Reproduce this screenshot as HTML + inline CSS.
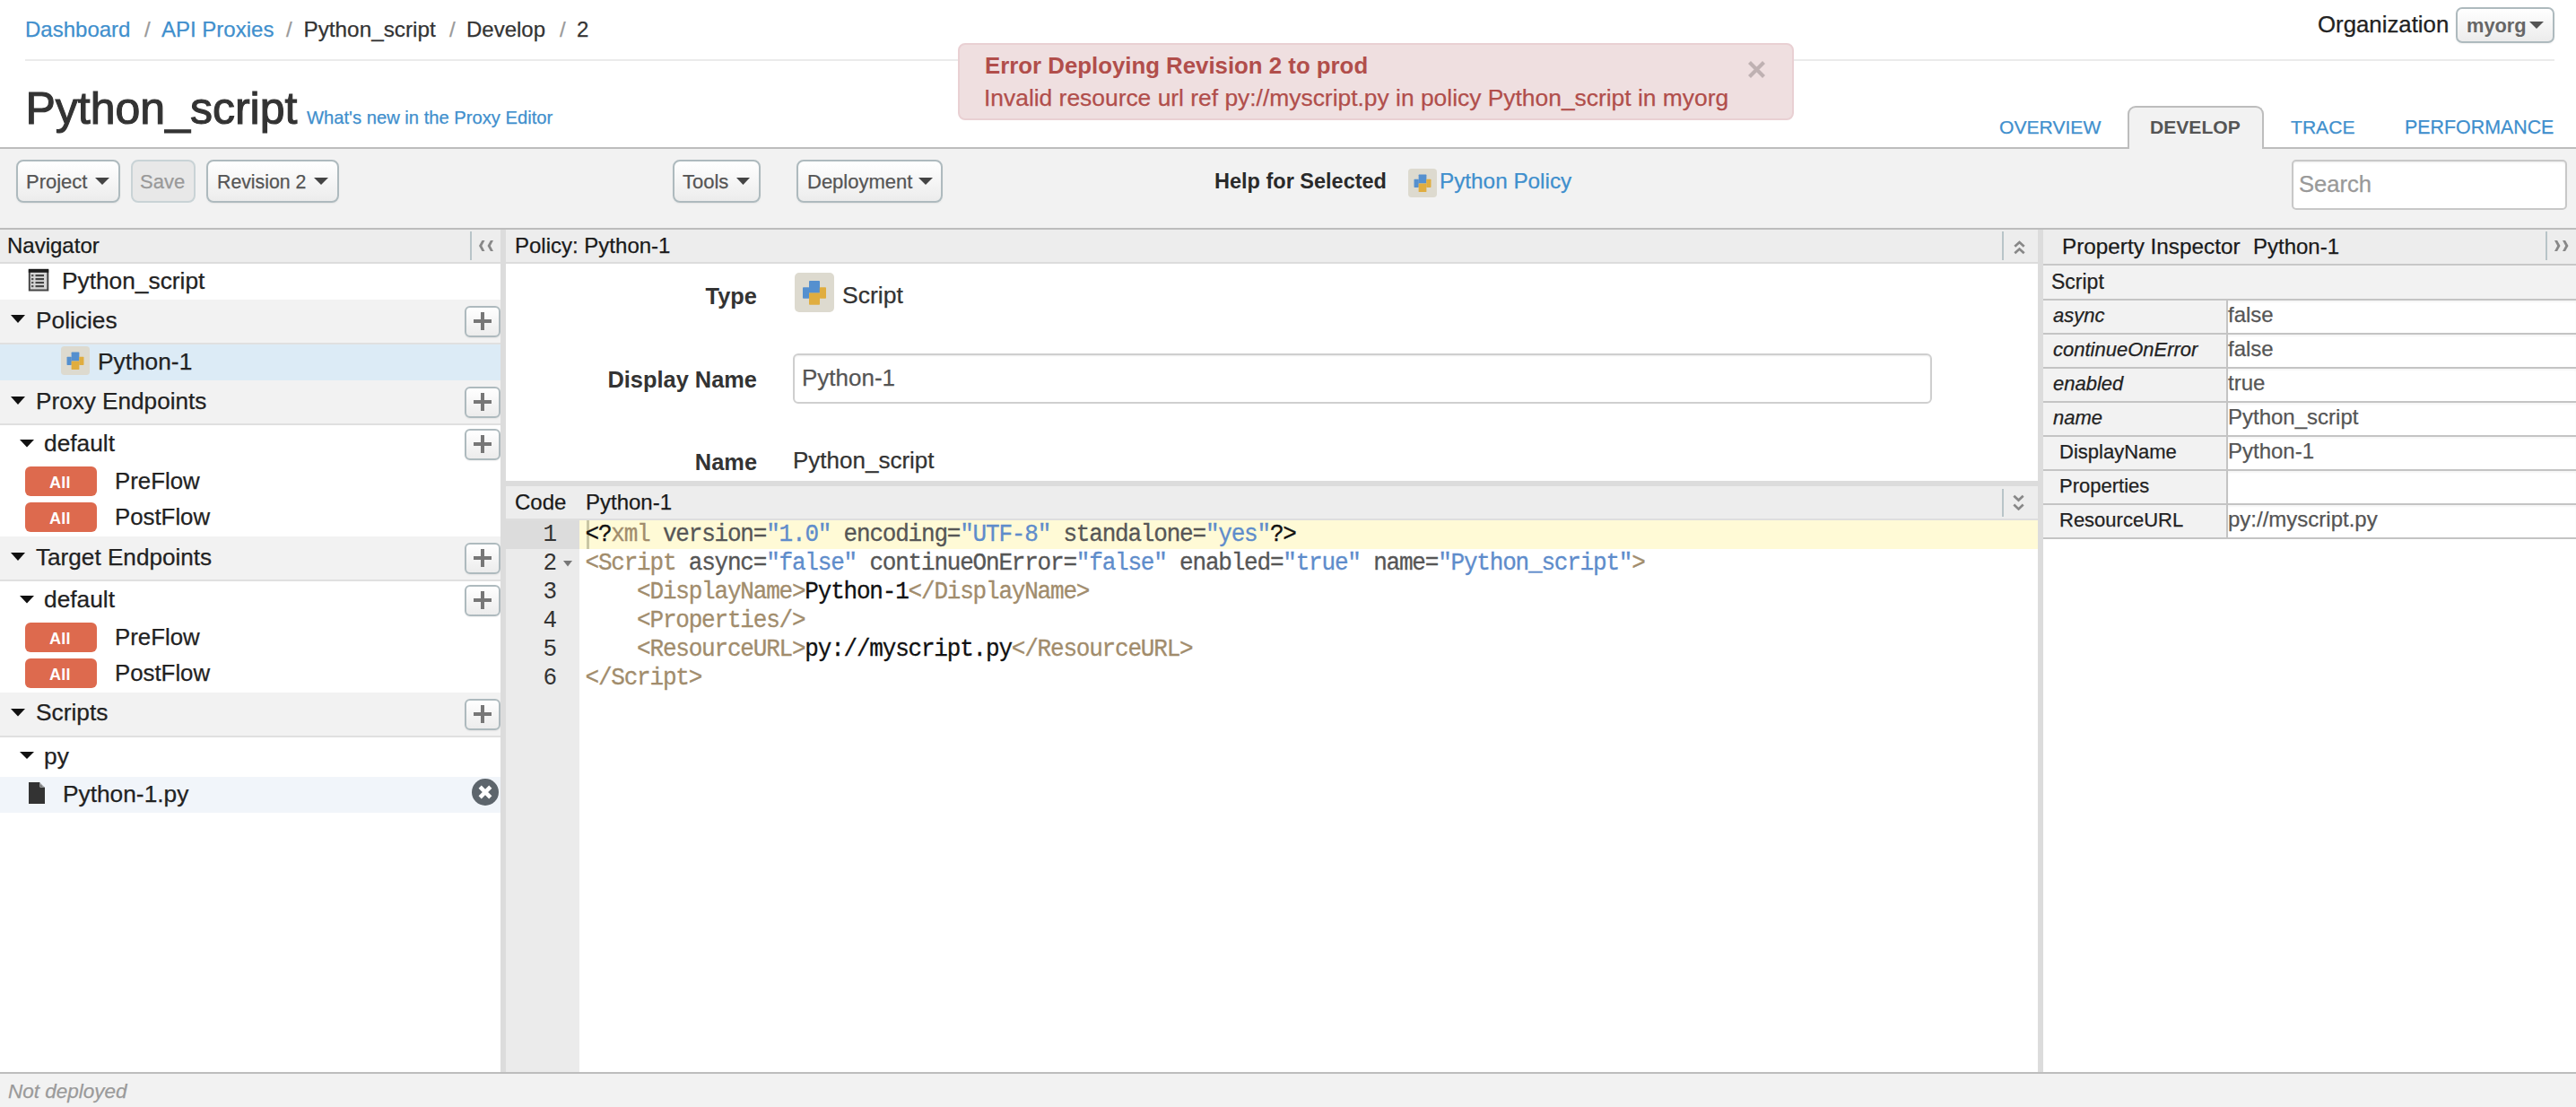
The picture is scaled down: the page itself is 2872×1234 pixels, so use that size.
<!DOCTYPE html>
<html><head><meta charset="utf-8"><title>Python_script - Develop</title>
<style>
html,body{margin:0;padding:0;width:2872px;height:1234px;overflow:hidden;background:#fff;}
body{position:relative;font-family:"Liberation Sans",sans-serif;}
body>div{position:absolute;}
</style></head><body>
<div style="left:28px;top:66px;width:2820px;height:2px;background:#ebebeb;"></div>
<div style="left:28px;top:19.4px;font-family:'Liberation Sans', sans-serif;font-size:24px;line-height:27px;color:#3f8fcd;white-space:pre;-webkit-text-stroke:0.25px #3f8fcd;">Dashboard</div>
<div style="left:161px;top:19.4px;font-family:'Liberation Sans', sans-serif;font-size:24px;line-height:27px;color:#9a9a9a;white-space:pre;-webkit-text-stroke:0.25px #9a9a9a;">/</div>
<div style="left:180px;top:19.4px;font-family:'Liberation Sans', sans-serif;font-size:24px;line-height:27px;color:#3f8fcd;white-space:pre;-webkit-text-stroke:0.25px #3f8fcd;">API Proxies</div>
<div style="left:319px;top:19.4px;font-family:'Liberation Sans', sans-serif;font-size:24px;line-height:27px;color:#9a9a9a;white-space:pre;-webkit-text-stroke:0.25px #9a9a9a;">/</div>
<div style="left:338.5px;top:19.4px;font-family:'Liberation Sans', sans-serif;font-size:24.3px;line-height:27px;color:#333;white-space:pre;-webkit-text-stroke:0.25px #333;">Python_script</div>
<div style="left:501px;top:19.4px;font-family:'Liberation Sans', sans-serif;font-size:24px;line-height:27px;color:#9a9a9a;white-space:pre;-webkit-text-stroke:0.25px #9a9a9a;">/</div>
<div style="left:520px;top:19.4px;font-family:'Liberation Sans', sans-serif;font-size:24px;line-height:27px;color:#333;white-space:pre;-webkit-text-stroke:0.25px #333;">Develop</div>
<div style="left:624px;top:19.4px;font-family:'Liberation Sans', sans-serif;font-size:24px;line-height:27px;color:#9a9a9a;white-space:pre;-webkit-text-stroke:0.25px #9a9a9a;">/</div>
<div style="left:643px;top:19.4px;font-family:'Liberation Sans', sans-serif;font-size:24px;line-height:27px;color:#333;white-space:pre;-webkit-text-stroke:0.25px #333;">2</div>
<div style="left:28.5px;top:93px;font-family:'Liberation Sans', sans-serif;font-size:50px;line-height:56px;color:#333;white-space:pre;-webkit-text-stroke:1.1px #333;">Python_script</div>
<div style="left:342px;top:120px;font-family:'Liberation Sans', sans-serif;font-size:20.2px;line-height:22px;color:#3f8fcd;white-space:pre;-webkit-text-stroke:0.25px #3f8fcd;">What&#x27;s new in the Proxy Editor</div>
<div style="left:1068px;top:48px;width:932px;height:86px;background:#efdfe0;border:2px solid #e9d0d3;border-radius:8px;box-sizing:border-box;"></div>
<div style="left:1098px;top:59px;font-family:'Liberation Sans', sans-serif;font-size:25.8px;line-height:28px;color:#b14e4b;white-space:pre;font-weight:bold;">Error Deploying Revision 2 to prod</div>
<div style="left:1097px;top:94px;font-family:'Liberation Sans', sans-serif;font-size:26.4px;line-height:30px;color:#b14e4b;white-space:pre;-webkit-text-stroke:0.25px #b14e4b;">Invalid resource url ref py://myscript.py in policy Python_script in myorg</div>
<svg style="position:absolute;left:1948px;top:67px;" width="21" height="21" viewBox="0 0 21 21"><path d="M2.5,2.5 L18.5,18.5 M18.5,2.5 L2.5,18.5" stroke="#bfb1b2" stroke-width="4.2"/></svg>
<div style="left:2584px;top:13px;font-family:'Liberation Sans', sans-serif;font-size:25.8px;line-height:28px;color:#222;white-space:pre;-webkit-text-stroke:0.25px #222;">Organization</div>
<div style="left:2738px;top:8px;width:110px;height:40px;border:2px solid #aebabe;border-radius:7px;background:linear-gradient(#ffffff,#ececec);box-sizing:border-box;box-shadow:0 1px 2px rgba(0,0,0,0.06);"></div>
<div style="left:2750px;top:16px;font-family:'Liberation Sans', sans-serif;font-size:21.8px;line-height:25px;color:#666;white-space:pre;font-weight:bold;">myorg</div>
<svg style="position:absolute;left:2820px;top:24px;" width="16" height="8" viewBox="0 0 16 8"><polygon points="0,0 16,0 8.0,8" fill="#555"/></svg>
<div style="left:2229px;top:129.5px;font-family:'Liberation Sans', sans-serif;font-size:21.1px;line-height:23px;color:#3f8fcd;white-space:pre;-webkit-text-stroke:0.25px #3f8fcd;">OVERVIEW</div>
<div style="left:2372px;top:118px;width:152px;height:48px;background:#f2f2f2;border:2px solid #bdbdbd;border-bottom:none;border-radius:9px 9px 0 0;box-sizing:border-box;z-index:2;"></div>
<div style="left:2397px;top:129.5px;font-family:'Liberation Sans', sans-serif;font-size:21.1px;line-height:23px;color:#555;white-space:pre;font-weight:bold;z-index:3;">DEVELOP</div>
<div style="left:2554px;top:129.5px;font-family:'Liberation Sans', sans-serif;font-size:21.1px;line-height:23px;color:#3f8fcd;white-space:pre;-webkit-text-stroke:0.25px #3f8fcd;">TRACE</div>
<div style="left:2681px;top:129.5px;font-family:'Liberation Sans', sans-serif;font-size:21.4px;line-height:24px;color:#3f8fcd;white-space:pre;-webkit-text-stroke:0.25px #3f8fcd;">PERFORMANCE</div>
<div style="left:0px;top:164px;width:2872px;height:2px;background:#bdbdbd;"></div>
<div style="left:0px;top:166px;width:2872px;height:88px;background:#f2f2f2;"></div>
<div style="left:0px;top:254px;width:2872px;height:2px;background:#bdbdbd;"></div>
<div style="left:18px;top:178px;width:116px;height:48px;border:2px solid #aebabe;border-radius:8px;background:linear-gradient(#ffffff,#ececec);box-sizing:border-box;box-shadow:0 1px 2px rgba(0,0,0,0.06);"></div>
<div style="left:29px;top:190px;font-family:'Liberation Sans', sans-serif;font-size:22px;line-height:25px;color:#555;white-space:pre;-webkit-text-stroke:0.25px #555;">Project</div>
<svg style="position:absolute;left:106px;top:198px;" width="16" height="8" viewBox="0 0 16 8"><polygon points="0,0 16,0 8.0,8" fill="#444"/></svg>
<div style="left:146px;top:178px;width:72px;height:48px;border:2px solid #c9d3d6;border-radius:8px;background:#e8e8e8;box-sizing:border-box;"></div>
<div style="left:156px;top:190px;font-family:'Liberation Sans', sans-serif;font-size:22px;line-height:25px;color:#999;white-space:pre;-webkit-text-stroke:0.25px #999;">Save</div>
<div style="left:230px;top:178px;width:148px;height:48px;border:2px solid #aebabe;border-radius:8px;background:linear-gradient(#ffffff,#ececec);box-sizing:border-box;box-shadow:0 1px 2px rgba(0,0,0,0.06);"></div>
<div style="left:242px;top:191px;font-family:'Liberation Sans', sans-serif;font-size:21.3px;line-height:24px;color:#555;white-space:pre;-webkit-text-stroke:0.25px #555;">Revision 2</div>
<svg style="position:absolute;left:350px;top:198px;" width="16" height="8" viewBox="0 0 16 8"><polygon points="0,0 16,0 8.0,8" fill="#444"/></svg>
<div style="left:750px;top:178px;width:98px;height:48px;border:2px solid #aebabe;border-radius:8px;background:linear-gradient(#ffffff,#ececec);box-sizing:border-box;box-shadow:0 1px 2px rgba(0,0,0,0.06);"></div>
<div style="left:761px;top:190px;font-family:'Liberation Sans', sans-serif;font-size:22px;line-height:25px;color:#555;white-space:pre;-webkit-text-stroke:0.25px #555;">Tools</div>
<svg style="position:absolute;left:821px;top:198px;" width="15" height="8" viewBox="0 0 15 8"><polygon points="0,0 15,0 7.5,8" fill="#444"/></svg>
<div style="left:888px;top:178px;width:163px;height:48px;border:2px solid #aebabe;border-radius:8px;background:linear-gradient(#ffffff,#ececec);box-sizing:border-box;box-shadow:0 1px 2px rgba(0,0,0,0.06);"></div>
<div style="left:900px;top:190px;font-family:'Liberation Sans', sans-serif;font-size:22px;line-height:25px;color:#555;white-space:pre;-webkit-text-stroke:0.25px #555;">Deployment</div>
<svg style="position:absolute;left:1024px;top:198px;" width="16" height="8" viewBox="0 0 16 8"><polygon points="0,0 16,0 8.0,8" fill="#444"/></svg>
<div style="left:1354px;top:189px;font-family:'Liberation Sans', sans-serif;font-size:23.5px;line-height:26px;color:#2a2a2a;white-space:pre;font-weight:bold;">Help for Selected</div>
<svg style="position:absolute;left:1570px;top:188px;" width="32" height="32" viewBox="0 0 32 32"><rect x="0" y="0" width="32" height="32" rx="3.64" fill="#dddacf"/><rect x="11.64" y="6.62" width="8.73" height="9.89" fill="#5590cf" rx="0.58"/><rect x="6.55" y="11.85" width="5.24" height="9.09" fill="#5590cf" rx="0.58"/><rect x="11.64" y="16.44" width="8.73" height="9.60" fill="#e0ad3f" rx="0.58"/><rect x="20.22" y="11.85" width="5.24" height="9.09" fill="#e0ad3f" rx="0.58"/></svg>
<div style="left:1605px;top:188px;font-family:'Liberation Sans', sans-serif;font-size:24.3px;line-height:27px;color:#3f8fcd;white-space:pre;-webkit-text-stroke:0.25px #3f8fcd;">Python Policy</div>
<div style="left:2555px;top:178px;width:307px;height:56px;background:#fff;border:2px solid #c8c8c8;border-radius:5px;box-sizing:border-box;box-shadow:inset 0 1px 2px rgba(0,0,0,0.08);"></div>
<div style="left:2563px;top:191px;font-family:'Liberation Sans', sans-serif;font-size:25.6px;line-height:28px;color:#999;white-space:pre;-webkit-text-stroke:0.25px #999;">Search</div>
<div style="left:0px;top:256px;width:2872px;height:939px;background:#fff;"></div>
<div style="left:0px;top:256px;width:558px;height:36px;background:#ededed;"></div>
<div style="left:0px;top:292px;width:558px;height:2px;background:#dcdcdc;"></div>
<div style="left:8px;top:260px;font-family:'Liberation Sans', sans-serif;font-size:24px;line-height:27px;color:#1a1a1a;white-space:pre;-webkit-text-stroke:0.25px #1a1a1a;">Navigator</div>
<div style="left:524px;top:258px;width:2px;height:32px;background:#b8c4c8;"></div>
<svg style="position:absolute;left:534px;top:268px;" width="17" height="12" viewBox="0 0 17 12"><polygon points="6.5,0 3.4,0 0,6 3.4,12 6.5,12 3.3,6" fill="#888"/><polygon points="16,0 12.9,0 9.5,6 12.9,12 16,12 12.8,6" fill="#888"/></svg>
<svg style="position:absolute;left:31px;top:299px;" width="24" height="26" viewBox="0 0 24 26"><rect x="1.8" y="2.5" width="20.5" height="22" fill="#d6d6d6" stroke="#444" stroke-width="2"/><rect x="0.8" y="0.8" width="22.4" height="4" fill="#1e1e1e"/><rect x="4" y="7" width="2.4" height="2.2" fill="#555"/><rect x="8.5" y="7" width="9.5" height="2.2" fill="#444"/><rect x="4" y="11" width="2.4" height="2.2" fill="#555"/><rect x="8.5" y="11" width="9.5" height="2.2" fill="#444"/><rect x="4" y="15" width="2.4" height="2.2" fill="#555"/><rect x="8.5" y="15" width="9.5" height="2.2" fill="#444"/><rect x="4" y="19" width="2.4" height="2.2" fill="#555"/><rect x="8.5" y="19" width="9.5" height="2.2" fill="#444"/></svg>
<div style="left:69px;top:298px;font-family:'Liberation Sans', sans-serif;font-size:26.3px;line-height:30px;color:#222;white-space:pre;-webkit-text-stroke:0.25px #222;">Python_script</div>
<div style="left:0px;top:334px;width:558px;height:48px;background:#f2f2f2;"></div>
<div style="left:0px;top:382px;width:558px;height:2px;background:#e0e0e0;"></div>
<svg style="position:absolute;left:12px;top:351px;" width="16" height="9" viewBox="0 0 16 9"><polygon points="0,0 16,0 8.0,9" fill="#111"/></svg>
<div style="left:40px;top:342px;font-family:'Liberation Sans', sans-serif;font-size:26.3px;line-height:30px;color:#222;white-space:pre;-webkit-text-stroke:0.25px #222;">Policies</div>
<div style="left:518px;top:341px;width:40px;height:35px;border:2px solid #aebabe;border-radius:6px;background:linear-gradient(#ffffff,#ececec);box-sizing:border-box;box-shadow:0 1px 2px rgba(0,0,0,0.06);"></div>
<svg style="position:absolute;left:528px;top:348px;" width="20" height="20" viewBox="0 0 20 20"><rect x="8" y="0" width="4" height="20" fill="#777"/><rect x="0" y="8" width="20" height="4" fill="#777"/></svg>
<div style="left:0px;top:384px;width:558px;height:40px;background:#dcebf6;"></div>
<svg style="position:absolute;left:68px;top:386px;" width="32" height="32" viewBox="0 0 32 32"><rect x="0" y="0" width="32" height="32" rx="3.64" fill="#dddacf"/><rect x="11.64" y="6.62" width="8.73" height="9.89" fill="#5590cf" rx="0.58"/><rect x="6.55" y="11.85" width="5.24" height="9.09" fill="#5590cf" rx="0.58"/><rect x="11.64" y="16.44" width="8.73" height="9.60" fill="#e0ad3f" rx="0.58"/><rect x="20.22" y="11.85" width="5.24" height="9.09" fill="#e0ad3f" rx="0.58"/></svg>
<div style="left:109px;top:388px;font-family:'Liberation Sans', sans-serif;font-size:26.3px;line-height:30px;color:#222;white-space:pre;-webkit-text-stroke:0.25px #222;">Python-1</div>
<div style="left:0px;top:424px;width:558px;height:48px;background:#f2f2f2;"></div>
<div style="left:0px;top:472px;width:558px;height:2px;background:#e0e0e0;"></div>
<svg style="position:absolute;left:12px;top:442px;" width="16" height="9" viewBox="0 0 16 9"><polygon points="0,0 16,0 8.0,9" fill="#111"/></svg>
<div style="left:40px;top:432px;font-family:'Liberation Sans', sans-serif;font-size:26.15px;line-height:30px;color:#222;white-space:pre;-webkit-text-stroke:0.25px #222;">Proxy Endpoints</div>
<div style="left:518px;top:431px;width:40px;height:35px;border:2px solid #aebabe;border-radius:6px;background:linear-gradient(#ffffff,#ececec);box-sizing:border-box;box-shadow:0 1px 2px rgba(0,0,0,0.06);"></div>
<svg style="position:absolute;left:528px;top:438px;" width="20" height="20" viewBox="0 0 20 20"><rect x="8" y="0" width="4" height="20" fill="#777"/><rect x="0" y="8" width="20" height="4" fill="#777"/></svg>
<svg style="position:absolute;left:22px;top:490px;" width="16" height="8.5" viewBox="0 0 16 8.5"><polygon points="0,0 16,0 8.0,8.5" fill="#111"/></svg>
<div style="left:49px;top:479px;font-family:'Liberation Sans', sans-serif;font-size:26.3px;line-height:30px;color:#222;white-space:pre;-webkit-text-stroke:0.25px #222;">default</div>
<div style="left:518px;top:478px;width:40px;height:35px;border:2px solid #aebabe;border-radius:6px;background:linear-gradient(#ffffff,#ececec);box-sizing:border-box;box-shadow:0 1px 2px rgba(0,0,0,0.06);"></div>
<svg style="position:absolute;left:528px;top:485px;" width="20" height="20" viewBox="0 0 20 20"><rect x="8" y="0" width="4" height="20" fill="#777"/><rect x="0" y="8" width="20" height="4" fill="#777"/></svg>
<div style="left:28px;top:520px;width:80px;height:33px;background:#dd6a4e;border-radius:6px;"></div>
<div style="left:55px;top:527.5px;font-family:'Liberation Sans', sans-serif;font-size:18px;line-height:20px;color:#fff;white-space:pre;font-weight:bold;letter-spacing:0.3px;">All</div>
<div style="left:128px;top:522px;font-family:'Liberation Sans', sans-serif;font-size:25.8px;line-height:28px;color:#222;white-space:pre;-webkit-text-stroke:0.25px #222;">PreFlow</div>
<div style="left:28px;top:560px;width:80px;height:33px;background:#dd6a4e;border-radius:6px;"></div>
<div style="left:55px;top:567.5px;font-family:'Liberation Sans', sans-serif;font-size:18px;line-height:20px;color:#fff;white-space:pre;font-weight:bold;letter-spacing:0.3px;">All</div>
<div style="left:128px;top:562px;font-family:'Liberation Sans', sans-serif;font-size:25.8px;line-height:28px;color:#222;white-space:pre;-webkit-text-stroke:0.25px #222;">PostFlow</div>
<div style="left:0px;top:598px;width:558px;height:48px;background:#f2f2f2;"></div>
<div style="left:0px;top:646px;width:558px;height:2px;background:#e0e0e0;"></div>
<svg style="position:absolute;left:12px;top:616px;" width="16" height="9" viewBox="0 0 16 9"><polygon points="0,0 16,0 8.0,9" fill="#111"/></svg>
<div style="left:40px;top:606px;font-family:'Liberation Sans', sans-serif;font-size:26.15px;line-height:30px;color:#222;white-space:pre;-webkit-text-stroke:0.25px #222;">Target Endpoints</div>
<div style="left:518px;top:605px;width:40px;height:35px;border:2px solid #aebabe;border-radius:6px;background:linear-gradient(#ffffff,#ececec);box-sizing:border-box;box-shadow:0 1px 2px rgba(0,0,0,0.06);"></div>
<svg style="position:absolute;left:528px;top:612px;" width="20" height="20" viewBox="0 0 20 20"><rect x="8" y="0" width="4" height="20" fill="#777"/><rect x="0" y="8" width="20" height="4" fill="#777"/></svg>
<svg style="position:absolute;left:22px;top:664px;" width="16" height="8.5" viewBox="0 0 16 8.5"><polygon points="0,0 16,0 8.0,8.5" fill="#111"/></svg>
<div style="left:49px;top:653px;font-family:'Liberation Sans', sans-serif;font-size:26.3px;line-height:30px;color:#222;white-space:pre;-webkit-text-stroke:0.25px #222;">default</div>
<div style="left:518px;top:652px;width:40px;height:35px;border:2px solid #aebabe;border-radius:6px;background:linear-gradient(#ffffff,#ececec);box-sizing:border-box;box-shadow:0 1px 2px rgba(0,0,0,0.06);"></div>
<svg style="position:absolute;left:528px;top:659px;" width="20" height="20" viewBox="0 0 20 20"><rect x="8" y="0" width="4" height="20" fill="#777"/><rect x="0" y="8" width="20" height="4" fill="#777"/></svg>
<div style="left:28px;top:694px;width:80px;height:33px;background:#dd6a4e;border-radius:6px;"></div>
<div style="left:55px;top:701.5px;font-family:'Liberation Sans', sans-serif;font-size:18px;line-height:20px;color:#fff;white-space:pre;font-weight:bold;letter-spacing:0.3px;">All</div>
<div style="left:128px;top:696px;font-family:'Liberation Sans', sans-serif;font-size:25.8px;line-height:28px;color:#222;white-space:pre;-webkit-text-stroke:0.25px #222;">PreFlow</div>
<div style="left:28px;top:734px;width:80px;height:33px;background:#dd6a4e;border-radius:6px;"></div>
<div style="left:55px;top:741.5px;font-family:'Liberation Sans', sans-serif;font-size:18px;line-height:20px;color:#fff;white-space:pre;font-weight:bold;letter-spacing:0.3px;">All</div>
<div style="left:128px;top:736px;font-family:'Liberation Sans', sans-serif;font-size:25.8px;line-height:28px;color:#222;white-space:pre;-webkit-text-stroke:0.25px #222;">PostFlow</div>
<div style="left:0px;top:772px;width:558px;height:48px;background:#f2f2f2;"></div>
<div style="left:0px;top:820px;width:558px;height:2px;background:#e0e0e0;"></div>
<svg style="position:absolute;left:12px;top:790px;" width="16" height="8.5" viewBox="0 0 16 8.5"><polygon points="0,0 16,0 8.0,8.5" fill="#111"/></svg>
<div style="left:40px;top:779px;font-family:'Liberation Sans', sans-serif;font-size:26.3px;line-height:30px;color:#222;white-space:pre;-webkit-text-stroke:0.25px #222;">Scripts</div>
<div style="left:518px;top:779px;width:40px;height:35px;border:2px solid #aebabe;border-radius:6px;background:linear-gradient(#ffffff,#ececec);box-sizing:border-box;box-shadow:0 1px 2px rgba(0,0,0,0.06);"></div>
<svg style="position:absolute;left:528px;top:786px;" width="20" height="20" viewBox="0 0 20 20"><rect x="8" y="0" width="4" height="20" fill="#777"/><rect x="0" y="8" width="20" height="4" fill="#777"/></svg>
<svg style="position:absolute;left:22px;top:838px;" width="16" height="8" viewBox="0 0 16 8"><polygon points="0,0 16,0 8.0,8" fill="#111"/></svg>
<div style="left:49px;top:828px;font-family:'Liberation Sans', sans-serif;font-size:26.3px;line-height:30px;color:#222;white-space:pre;-webkit-text-stroke:0.25px #222;">py</div>
<div style="left:0px;top:866px;width:558px;height:40px;background:#f1f5fa;"></div>
<svg style="position:absolute;left:31px;top:871px;" width="20" height="26" viewBox="0 0 20 26"><path d="M1,1 H13 L19,7 V25 H1 Z" fill="#333"/><path d="M13.5,1.5 L18.5,6.5 H13.5 Z" fill="#f1f5fa"/><path d="M14,2.8 L17.2,6 H14 Z" fill="#777"/></svg>
<div style="left:70px;top:870px;font-family:'Liberation Sans', sans-serif;font-size:26.3px;line-height:30px;color:#222;white-space:pre;-webkit-text-stroke:0.25px #222;">Python-1.py</div>
<svg style="position:absolute;left:526px;top:868px;" width="30" height="30" viewBox="0 0 30 30"><circle cx="15" cy="15" r="15" fill="#5d656c"/><path d="M9.2,9.2 L20.8,20.8 M20.8,9.2 L9.2,20.8" stroke="#fff" stroke-width="4.5"/></svg>
<div style="left:558px;top:256px;width:6px;height:939px;background:#dcdcdc;"></div>
<div style="left:2272px;top:256px;width:6px;height:939px;background:#dcdcdc;"></div>
<div style="left:564px;top:256px;width:1708px;height:36px;background:#ededed;"></div>
<div style="left:564px;top:292px;width:1708px;height:2px;background:#dcdcdc;"></div>
<div style="left:574px;top:260px;font-family:'Liberation Sans', sans-serif;font-size:24px;line-height:27px;color:#1a1a1a;white-space:pre;-webkit-text-stroke:0.25px #1a1a1a;">Policy: Python-1</div>
<div style="left:2232px;top:258px;width:2px;height:32px;background:#b8c4c8;"></div>
<svg style="position:absolute;left:2244.5px;top:268px;" width="13" height="16" viewBox="0 0 13 16"><path d="M1.3,6.8 L6.5,2 L11.7,6.8 M1.3,14.3 L6.5,9.5 L11.7,14.3" stroke="#888" stroke-width="2.7" fill="none"/></svg>
<div style="left:0px;width:844px;text-align:right;top:316px;font-family:'Liberation Sans', sans-serif;font-size:25.4px;line-height:28px;color:#333;white-space:pre;font-weight:bold;">Type</div>
<svg style="position:absolute;left:886px;top:304px;" width="44" height="44" viewBox="0 0 44 44"><rect x="0" y="0" width="44" height="44" rx="5.00" fill="#dddacf"/><rect x="16.00" y="9.10" width="12.00" height="13.60" fill="#5590cf" rx="0.80"/><rect x="9.00" y="16.30" width="7.20" height="12.50" fill="#5590cf" rx="0.80"/><rect x="16.00" y="22.60" width="12.00" height="13.20" fill="#e0ad3f" rx="0.80"/><rect x="27.80" y="16.30" width="7.20" height="12.50" fill="#e0ad3f" rx="0.80"/></svg>
<div style="left:939px;top:314px;font-family:'Liberation Sans', sans-serif;font-size:26.5px;line-height:30px;color:#333;white-space:pre;-webkit-text-stroke:0.25px #333;">Script</div>
<div style="left:0px;width:844px;text-align:right;top:408.5px;font-family:'Liberation Sans', sans-serif;font-size:25.4px;line-height:28px;color:#333;white-space:pre;font-weight:bold;">Display Name</div>
<div style="left:884px;top:394px;width:1270px;height:56px;background:#fff;border:2px solid #cfcfcf;border-radius:6px;box-sizing:border-box;box-shadow:inset 0 1px 2px rgba(0,0,0,0.07);"></div>
<div style="left:894px;top:406px;font-family:'Liberation Sans', sans-serif;font-size:26px;line-height:30px;color:#555;white-space:pre;-webkit-text-stroke:0.25px #555;">Python-1</div>
<div style="left:0px;width:844px;text-align:right;top:500.5px;font-family:'Liberation Sans', sans-serif;font-size:25.4px;line-height:28px;color:#333;white-space:pre;font-weight:bold;">Name</div>
<div style="left:884px;top:497.5px;font-family:'Liberation Sans', sans-serif;font-size:26px;line-height:30px;color:#333;white-space:pre;-webkit-text-stroke:0.25px #333;">Python_script</div>
<div style="left:564px;top:536px;width:1708px;height:6px;background:#dcdcdc;"></div>
<div style="left:564px;top:542px;width:1708px;height:36px;background:#ededed;"></div>
<div style="left:564px;top:578px;width:1708px;height:2px;background:#dedede;"></div>
<div style="left:574px;top:546px;font-family:'Liberation Sans', sans-serif;font-size:24px;line-height:27px;color:#1a1a1a;white-space:pre;-webkit-text-stroke:0.25px #1a1a1a;">Code</div>
<div style="left:653px;top:546px;font-family:'Liberation Sans', sans-serif;font-size:24px;line-height:27px;color:#1a1a1a;white-space:pre;-webkit-text-stroke:0.25px #1a1a1a;">Python-1</div>
<div style="left:2232px;top:545px;width:2px;height:31px;background:#b8c4c8;"></div>
<svg style="position:absolute;left:2244px;top:551px;" width="13" height="18" viewBox="0 0 13 18"><path d="M1.3,1.8 L6.5,6.6 L11.7,1.8 M1.3,11.6 L6.5,16.4 L11.7,11.6" stroke="#888" stroke-width="2.7" fill="none"/></svg>
<div style="left:564px;top:580px;width:82px;height:615px;background:#ebebeb;"></div>
<div style="left:564px;top:580px;width:82px;height:32px;background:#dcdcdc;"></div>
<div style="left:646px;top:580px;width:1626px;height:32px;background:#fffad6;"></div>
<div style="left:654px;top:580px;width:3px;height:32px;background:#c9c6a4;"></div>
<div style="left:0px;width:620px;text-align:right;top:581px;font-family:'Liberation Mono', monospace;font-size:26px;line-height:30px;color:#333;white-space:pre;transform:scaleY(1.06);transform-origin:0 22px;letter-spacing:-1.09px;">1</div>
<div style="left:0px;width:620px;text-align:right;top:613px;font-family:'Liberation Mono', monospace;font-size:26px;line-height:30px;color:#333;white-space:pre;transform:scaleY(1.06);transform-origin:0 22px;letter-spacing:-1.09px;">2</div>
<div style="left:0px;width:620px;text-align:right;top:645px;font-family:'Liberation Mono', monospace;font-size:26px;line-height:30px;color:#333;white-space:pre;transform:scaleY(1.06);transform-origin:0 22px;letter-spacing:-1.09px;">3</div>
<div style="left:0px;width:620px;text-align:right;top:677px;font-family:'Liberation Mono', monospace;font-size:26px;line-height:30px;color:#333;white-space:pre;transform:scaleY(1.06);transform-origin:0 22px;letter-spacing:-1.09px;">4</div>
<div style="left:0px;width:620px;text-align:right;top:709px;font-family:'Liberation Mono', monospace;font-size:26px;line-height:30px;color:#333;white-space:pre;transform:scaleY(1.06);transform-origin:0 22px;letter-spacing:-1.09px;">5</div>
<div style="left:0px;width:620px;text-align:right;top:741px;font-family:'Liberation Mono', monospace;font-size:26px;line-height:30px;color:#333;white-space:pre;transform:scaleY(1.06);transform-origin:0 22px;letter-spacing:-1.09px;">6</div>
<svg style="position:absolute;left:628px;top:625px;" width="10" height="7" viewBox="0 0 10 7"><polygon points="0,0 10,0 5,6.5" fill="#777"/></svg>
<div style="left:652.5px;top:581px;font-family:'Liberation Mono', monospace;font-size:26px;line-height:30px;color:#111;white-space:pre;transform:scaleY(1.06);transform-origin:0 22px;letter-spacing:-1.2px;-webkit-text-stroke:0.3px currentColor;"><span style="color:#111">&lt;?</span><span style="color:#a18c6c">xml</span><span style="color:#565656"> version</span><span style="color:#565656">=</span><span style="color:#5e8ccb">&quot;1.0&quot;</span><span style="color:#565656"> encoding</span><span style="color:#565656">=</span><span style="color:#5e8ccb">&quot;UTF-8&quot;</span><span style="color:#565656"> standalone</span><span style="color:#565656">=</span><span style="color:#5e8ccb">&quot;yes&quot;</span><span style="color:#111">?&gt;</span></div>
<div style="left:652.5px;top:613px;font-family:'Liberation Mono', monospace;font-size:26px;line-height:30px;color:#111;white-space:pre;transform:scaleY(1.06);transform-origin:0 22px;letter-spacing:-1.2px;-webkit-text-stroke:0.3px currentColor;"><span style="color:#a18c6c">&lt;Script</span><span style="color:#565656"> async</span><span style="color:#565656">=</span><span style="color:#5e8ccb">&quot;false&quot;</span><span style="color:#565656"> continueOnError</span><span style="color:#565656">=</span><span style="color:#5e8ccb">&quot;false&quot;</span><span style="color:#565656"> enabled</span><span style="color:#565656">=</span><span style="color:#5e8ccb">&quot;true&quot;</span><span style="color:#565656"> name</span><span style="color:#565656">=</span><span style="color:#5e8ccb">&quot;Python_script&quot;</span><span style="color:#a18c6c">&gt;</span></div>
<div style="left:652.5px;top:645px;font-family:'Liberation Mono', monospace;font-size:26px;line-height:30px;color:#111;white-space:pre;transform:scaleY(1.06);transform-origin:0 22px;letter-spacing:-1.2px;-webkit-text-stroke:0.3px currentColor;"><span style="color:#a18c6c">    &lt;DisplayName&gt;</span><span style="color:#111">Python-1</span><span style="color:#a18c6c">&lt;/DisplayName&gt;</span></div>
<div style="left:652.5px;top:677px;font-family:'Liberation Mono', monospace;font-size:26px;line-height:30px;color:#111;white-space:pre;transform:scaleY(1.06);transform-origin:0 22px;letter-spacing:-1.2px;-webkit-text-stroke:0.3px currentColor;"><span style="color:#a18c6c">    &lt;Properties/&gt;</span></div>
<div style="left:652.5px;top:709px;font-family:'Liberation Mono', monospace;font-size:26px;line-height:30px;color:#111;white-space:pre;transform:scaleY(1.06);transform-origin:0 22px;letter-spacing:-1.2px;-webkit-text-stroke:0.3px currentColor;"><span style="color:#a18c6c">    &lt;ResourceURL&gt;</span><span style="color:#111">py://myscript.py</span><span style="color:#a18c6c">&lt;/ResourceURL&gt;</span></div>
<div style="left:652.5px;top:741px;font-family:'Liberation Mono', monospace;font-size:26px;line-height:30px;color:#111;white-space:pre;transform:scaleY(1.06);transform-origin:0 22px;letter-spacing:-1.2px;-webkit-text-stroke:0.3px currentColor;"><span style="color:#a18c6c">&lt;/Script&gt;</span></div>
<div style="left:2278px;top:256px;width:594px;height:38px;background:#ededed;"></div>
<div style="left:2278px;top:294px;width:594px;height:2px;background:#c8c8c8;"></div>
<div style="left:2299px;top:260.5px;font-family:'Liberation Sans', sans-serif;font-size:24.3px;line-height:27px;color:#1a1a1a;white-space:pre;-webkit-text-stroke:0.25px #1a1a1a;">Property Inspector</div>
<div style="left:2512px;top:260.5px;font-family:'Liberation Sans', sans-serif;font-size:24px;line-height:27px;color:#1a1a1a;white-space:pre;-webkit-text-stroke:0.25px #1a1a1a;">Python-1</div>
<div style="left:2838px;top:258px;width:2px;height:32px;background:#b8c4c8;"></div>
<svg style="position:absolute;left:2847.5px;top:268px;" width="17" height="12" viewBox="0 0 17 12"><polygon points="0,0 3.1,0 6.5,6 3.1,12 0,12 3.2,6" fill="#888"/><polygon points="9,0 12.1,0 15.5,6 12.1,12 9,12 12.2,6" fill="#888"/></svg>
<div style="left:2278px;top:296px;width:594px;height:37px;background:#f2f2f2;"></div>
<div style="left:2287px;top:300.5px;font-family:'Liberation Sans', sans-serif;font-size:23px;line-height:26px;color:#222;white-space:pre;-webkit-text-stroke:0.25px #222;">Script</div>
<div style="left:2278px;top:333px;width:594px;height:2px;background:#c4c4c4;"></div>
<div style="left:2278px;top:335px;width:204px;height:36px;background:#f2f2f2;"></div>
<div style="left:2482px;top:335px;width:2px;height:36px;background:#c4c4c4;"></div>
<div style="left:2484px;top:335px;width:388px;height:36px;background:#fff;box-shadow:inset 0 2px 2px rgba(0,0,0,0.04);"></div>
<div style="left:2289px;top:338.5px;font-family:'Liberation Sans', sans-serif;font-size:22px;line-height:25px;color:#222;white-space:pre;-webkit-text-stroke:0.25px #222;font-style:italic;">async</div>
<div style="left:2484px;top:336.5px;font-family:'Liberation Sans', sans-serif;font-size:24px;line-height:27px;color:#555;white-space:pre;-webkit-text-stroke:0.25px #555;">false</div>
<div style="left:2278px;top:371px;width:594px;height:2px;background:#c4c4c4;"></div>
<div style="left:2278px;top:373px;width:204px;height:36px;background:#f2f2f2;"></div>
<div style="left:2482px;top:373px;width:2px;height:36px;background:#c4c4c4;"></div>
<div style="left:2484px;top:373px;width:388px;height:36px;background:#fff;box-shadow:inset 0 2px 2px rgba(0,0,0,0.04);"></div>
<div style="left:2289px;top:376.5px;font-family:'Liberation Sans', sans-serif;font-size:22px;line-height:25px;color:#222;white-space:pre;-webkit-text-stroke:0.25px #222;font-style:italic;">continueOnError</div>
<div style="left:2484px;top:374.5px;font-family:'Liberation Sans', sans-serif;font-size:24px;line-height:27px;color:#555;white-space:pre;-webkit-text-stroke:0.25px #555;">false</div>
<div style="left:2278px;top:409px;width:594px;height:2px;background:#c4c4c4;"></div>
<div style="left:2278px;top:411px;width:204px;height:36px;background:#f2f2f2;"></div>
<div style="left:2482px;top:411px;width:2px;height:36px;background:#c4c4c4;"></div>
<div style="left:2484px;top:411px;width:388px;height:36px;background:#fff;box-shadow:inset 0 2px 2px rgba(0,0,0,0.04);"></div>
<div style="left:2289px;top:414.5px;font-family:'Liberation Sans', sans-serif;font-size:22px;line-height:25px;color:#222;white-space:pre;-webkit-text-stroke:0.25px #222;font-style:italic;">enabled</div>
<div style="left:2484px;top:412.5px;font-family:'Liberation Sans', sans-serif;font-size:24px;line-height:27px;color:#555;white-space:pre;-webkit-text-stroke:0.25px #555;">true</div>
<div style="left:2278px;top:447px;width:594px;height:2px;background:#c4c4c4;"></div>
<div style="left:2278px;top:449px;width:204px;height:36px;background:#f2f2f2;"></div>
<div style="left:2482px;top:449px;width:2px;height:36px;background:#c4c4c4;"></div>
<div style="left:2484px;top:449px;width:388px;height:36px;background:#fff;box-shadow:inset 0 2px 2px rgba(0,0,0,0.04);"></div>
<div style="left:2289px;top:452.5px;font-family:'Liberation Sans', sans-serif;font-size:22px;line-height:25px;color:#222;white-space:pre;-webkit-text-stroke:0.25px #222;font-style:italic;">name</div>
<div style="left:2484px;top:450.5px;font-family:'Liberation Sans', sans-serif;font-size:24px;line-height:27px;color:#555;white-space:pre;-webkit-text-stroke:0.25px #555;">Python_script</div>
<div style="left:2278px;top:485px;width:594px;height:2px;background:#c4c4c4;"></div>
<div style="left:2278px;top:487px;width:204px;height:36px;background:#f2f2f2;"></div>
<div style="left:2482px;top:487px;width:2px;height:36px;background:#c4c4c4;"></div>
<div style="left:2484px;top:487px;width:388px;height:36px;background:#fff;box-shadow:inset 0 2px 2px rgba(0,0,0,0.04);"></div>
<div style="left:2296px;top:490.5px;font-family:'Liberation Sans', sans-serif;font-size:22px;line-height:25px;color:#222;white-space:pre;-webkit-text-stroke:0.25px #222;">DisplayName</div>
<div style="left:2484px;top:488.5px;font-family:'Liberation Sans', sans-serif;font-size:24px;line-height:27px;color:#555;white-space:pre;-webkit-text-stroke:0.25px #555;">Python-1</div>
<div style="left:2278px;top:523px;width:594px;height:2px;background:#c4c4c4;"></div>
<div style="left:2278px;top:525px;width:204px;height:36px;background:#f2f2f2;"></div>
<div style="left:2482px;top:525px;width:2px;height:36px;background:#c4c4c4;"></div>
<div style="left:2484px;top:525px;width:388px;height:36px;background:#fff;box-shadow:inset 0 2px 2px rgba(0,0,0,0.04);"></div>
<div style="left:2296px;top:528.5px;font-family:'Liberation Sans', sans-serif;font-size:22px;line-height:25px;color:#222;white-space:pre;-webkit-text-stroke:0.25px #222;">Properties</div>
<div style="left:2278px;top:561px;width:594px;height:2px;background:#c4c4c4;"></div>
<div style="left:2278px;top:563px;width:204px;height:36px;background:#f2f2f2;"></div>
<div style="left:2482px;top:563px;width:2px;height:36px;background:#c4c4c4;"></div>
<div style="left:2484px;top:563px;width:388px;height:36px;background:#fff;box-shadow:inset 0 2px 2px rgba(0,0,0,0.04);"></div>
<div style="left:2296px;top:566.5px;font-family:'Liberation Sans', sans-serif;font-size:22px;line-height:25px;color:#222;white-space:pre;-webkit-text-stroke:0.25px #222;">ResourceURL</div>
<div style="left:2484px;top:564.5px;font-family:'Liberation Sans', sans-serif;font-size:24px;line-height:27px;color:#555;white-space:pre;-webkit-text-stroke:0.25px #555;">py://myscript.py</div>
<div style="left:2278px;top:599px;width:594px;height:2px;background:#c4c4c4;"></div>
<div style="left:0px;top:1195px;width:2872px;height:2px;background:#bdbdbd;"></div>
<div style="left:0px;top:1197px;width:2872px;height:37px;background:#f2f2f2;"></div>
<div style="left:9px;top:1204px;font-family:'Liberation Sans', sans-serif;font-size:22.5px;line-height:25px;color:#9a9a9a;white-space:pre;-webkit-text-stroke:0.25px #9a9a9a;font-style:italic;">Not deployed</div>
</body></html>
